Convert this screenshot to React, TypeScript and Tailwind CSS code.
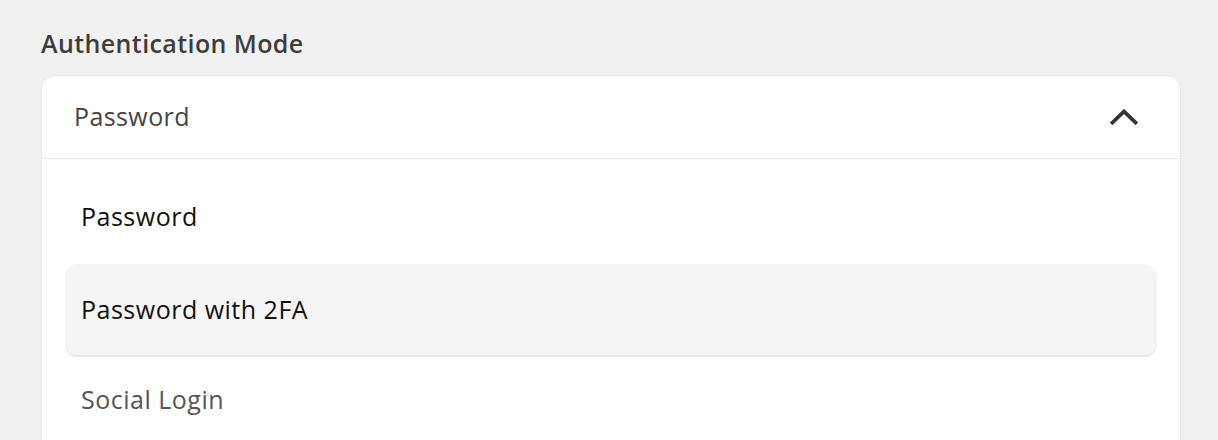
const options = [
  { label: 'Password', active: false, muted: false },
  { label: 'Password with 2FA', active: true, muted: false },
  { label: 'Social Login', active: false, muted: true },
];

function Chevron() {
  return (
    <svg width="28" height="16" viewBox="0 0 28 16" fill="none" className="text-[#333333]">
      <path d="M2.5 13.5 L14 2.5 L25.5 13.5" stroke="currentColor" strokeWidth="3.8" strokeLinecap="square" strokeLinejoin="miter" />
    </svg>
  );
}

export default function App() {
  return (
    <div
      className="min-h-screen w-full bg-[#f2f1f1] px-[41px] pt-[25px] overflow-hidden"
      style={{ fontFamily: '"Open Sans", "Noto Sans", sans-serif' }}
    >
      {/* LABEL */}
      <h2 className="text-[25px] leading-[36px] font-semibold tracking-[0.4px] text-[#3d3d3d] mb-[14px]">
        Authentication Mode
      </h2>

      <div className="w-[1140px]">
        {/* TRIGGER */}
        <button className="w-full h-[84px] flex items-center justify-between pl-[32px] pr-[42px] bg-white border border-[#e7e7e7] rounded-t-[14px] text-left">
          <span className="text-[25px] tracking-[0.4px] text-[#454545]">Password</span>
          <Chevron />
        </button>

        {/* OPTIONS */}
        <div className="bg-white border-x border-[#e7e7e7] px-[23px] pt-[11px] pb-10">
          {options.map((opt) => (
            <div
              key={opt.label}
              className={
                opt.active
                  ? 'h-[93px] flex items-center px-[16px] rounded-[12px] bg-[#f5f5f5] border-b-2 border-[#e6e6e6]'
                  : opt.muted
                    ? 'h-[86px] flex items-center px-[16px]'
                    : 'h-[94px] flex items-center px-[16px]'
              }
            >
              <span
                className={
                  opt.muted
                    ? 'text-[25px] tracking-[0.5px] text-[#555555]'
                    : 'text-[25px] tracking-[0.5px] text-[#111111]'
                }
              >
                {opt.label}
              </span>
            </div>
          ))}
        </div>
      </div>
    </div>
  );
}
